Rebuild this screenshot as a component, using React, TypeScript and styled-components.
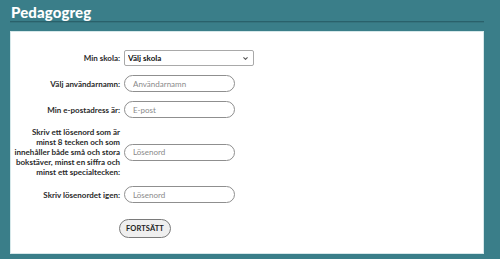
import React from 'react';
import styled, { createGlobalStyle } from 'styled-components';
import { ChevronDown } from 'lucide-react';

const teal = '#3a7e89';

const GlobalStyle = createGlobalStyle`
	html, body {
		margin: 0;
		padding: 0;
		background: ${teal};
	}
	body {
		font-family: Lato, "Liberation Sans", sans-serif;
		height: 259px;
		overflow: hidden;
	}
`;

const fields = [
	{ label: 'Välj användarnamn:', placeholder: 'Användarnamn', type: 'text' },
	{ label: 'Min e-postadress är:', placeholder: 'E-post', type: 'email' },
	{
		label: 'Skriv ett lösenord som är\nminst 8 tecken och som\ninnehåller både små och stora\nbokstäver, minst en siffra och\nminst ett specialtecken:',
		placeholder: 'Lösenord',
		type: 'password'
	},
	{ label: 'Skriv lösenordet igen:', placeholder: 'Lösenord', type: 'password' }
];

export default function App() {
	return (
		<>
			<GlobalStyle />
			<StyledPage>
				<Header>
					<Title>Pedagogreg</Title>
				</Header>
				<Panel>
					<FormGrid>
						<Label>Min skola:</Label>
						<SelectWrap>
							<Select defaultValue="">
								<option value="">Välj skola</option>
							</Select>
							<Chevron size={7} strokeWidth={3.5} />
						</SelectWrap>

						{fields.map(field => (
							<React.Fragment key={field.label}>
								<Label $wide={field.label.includes('\n')}>{field.label}</Label>
								<Input type={field.type} placeholder={field.placeholder} />
							</React.Fragment>
						))}
					</FormGrid>
					<Actions>
						<Button type="button">FORTSÄTT</Button>
					</Actions>
				</Panel>
			</StyledPage>
		</>
	);
}

const StyledPage = styled.div`
	width: 500px;
	height: 259px;
	padding: 0 16px 0 10px;
	box-sizing: border-box;
`;

const Header = styled.header`
	border-bottom: 1px solid #2a616b;
	padding: 4px 0 1px 1px;
	box-shadow: 0 1px 0 rgba(0, 0, 0, 0.08);
`;

const Title = styled.h1`
	margin: 0;
	color: #fff;
	font-family: Lato, "Liberation Sans", sans-serif;
	font-weight: 900;
	font-size: 15px;
	line-height: 16px;
	letter-spacing: 0.1px;
`;

const Panel = styled.main`
	margin-top: 9px;
	height: 223px;
	box-sizing: border-box;
	background: #fff;
	border: 1px solid #d6e8ea;
	padding: 18px 0 0 4px;
`;

const FormGrid = styled.div`
	display: grid;
	grid-template-columns: 105px auto;
	column-gap: 4px;
	row-gap: 9px;
	align-items: center;
	justify-content: start;
`;

const Label = styled.label<{ $wide?: boolean }>`
	text-align: right;
	white-space: pre-line;
	font-size: 8px;
	line-height: 10px;
	font-weight: 700;
	color: #2a2a2a;
	margin-left: -10px;
`;

const SelectWrap = styled.div`
	position: relative;
	display: flex;
	width: 130px;
`;

const Select = styled.select`
	appearance: none;
	width: 130px;
	height: 16px;
	box-sizing: border-box;
	border: 1px solid #a9a9a9;
	border-radius: 2px;
	background: #fff;
	font-family: Lato, "Liberation Sans", sans-serif;
	font-size: 8px;
	font-weight: 700;
	color: #111;
	padding: 0 0 0 3px;
	outline: none;
`;

const Chevron = styled(ChevronDown)`
	position: absolute;
	right: 5px;
	top: 5px;
	color: #555;
	pointer-events: none;
`;

const Input = styled.input`
	width: 111px;
	height: 17px;
	box-sizing: border-box;
	border: 1px solid #8f8f8f;
	border-radius: 9px;
	padding: 0 8px;
	font-family: Lato, "Liberation Sans", sans-serif;
	font-size: 8px;
	color: #111;
	outline: none;

	&::placeholder {
		color: #8a8a8a;
	}
`;

const Actions = styled.div`
	padding: 12px 0 0 104px;
`;

const Button = styled.button`
	height: 19px;
	width: 52px;
	padding: 0;
	border: 1px solid #7a7a7a;
	border-radius: 10px;
	background: #efefef;
	font-family: Lato, "Liberation Sans", sans-serif;
	font-size: 7.5px;
	font-weight: 700;
	color: #222;
	letter-spacing: 0.1px;
`;
